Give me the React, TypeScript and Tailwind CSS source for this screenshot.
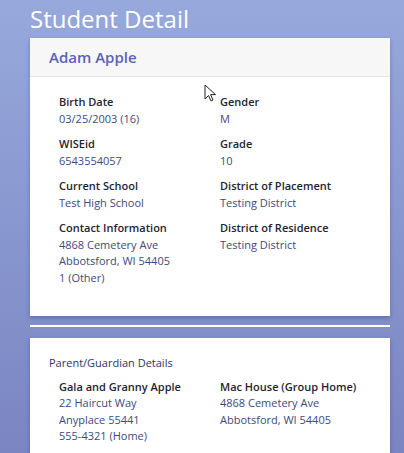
import React from "react";

const font = { fontFamily: '"Open Sans", "Liberation Sans", sans-serif' };

function Field({ label, lines }: { label: string; lines: string[] }) {
  return (
    <div className="flex flex-col">
      <div className="text-[11px] leading-[16.5px] font-semibold text-[#1f2433]">{label}</div>
      {lines.map((l) => (
        <div key={l} className="text-[11px] leading-[16.5px] text-[#3e4a7c]">
          {l}
        </div>
      ))}
    </div>
  );
}

function Cursor() {
  return (
    <svg
      className="absolute left-[204px] top-[84px]"
      width="14"
      height="20"
      viewBox="0 0 14 20"
    >
      <path
        d="M1 1 L1 15 L4.5 11.5 L7 17 L9 16 L6.6 10.6 L11.5 10.6 Z"
        fill="#fff"
        stroke="#222"
        strokeWidth="1"
        strokeLinejoin="round"
      />
    </svg>
  );
}

export default function App() {
  return (
    <div
      style={font}
      className="relative min-h-[453px] h-[453px] overflow-hidden bg-gradient-to-b from-[#97a9dc] to-[#7a85c1] px-[30px] pr-[14px]"
    >
      {/* Title */}
      <div className="h-[38px] text-[24px] leading-[38px] text-white">Student Detail</div>

      {/* Student card */}
      <div className="bg-white shadow-[0_2px_4px_rgba(40,50,100,0.35)]">
        <div className="h-[39px] bg-[#f7f7f7] border-b border-[#e2e4ea] px-[19px] flex items-center">
          <span className="text-[15px] font-semibold text-[#5a63b5]">Adam Apple</span>
        </div>
        <div className="grid grid-cols-[161px_1fr] gap-y-[9px] pl-[29px] pt-[17px] pb-[30px]">
          <Field label="Birth Date" lines={["03/25/2003 (16)"]} />
          <Field label="Gender" lines={["M"]} />
          <Field label="WISEid" lines={["6543554057"]} />
          <Field label="Grade" lines={["10"]} />
          <Field label="Current School" lines={["Test High School"]} />
          <Field label="District of Placement" lines={["Testing District"]} />
          <Field
            label="Contact Information"
            lines={["4868 Cemetery Ave", "Abbotsford, WI 54405", "1 (Other)"]}
          />
          <Field label="District of Residence" lines={["Testing District"]} />
        </div>
      </div>

      {/* Divider */}
      <div className="mt-[9px] mb-[11px] h-[1.5px] bg-white" />

      {/* Parent card */}
      <div className="bg-white shadow-[0_2px_4px_rgba(40,50,100,0.35)] pt-[17px] pb-[20px]">
        <div className="px-[19px] text-[11px] leading-[16px] text-[#2e3566]">Parent/Guardian Details</div>
        <div className="grid grid-cols-[161px_1fr] pl-[29px] pt-[8px]">
          <Field label="Gala and Granny Apple" lines={["22 Haircut Way", "Anyplace 55441", "555-4321 (Home)"]} />
          <Field label="Mac House (Group Home)" lines={["4868 Cemetery Ave", "Abbotsford, WI 54405"]} />
        </div>
      </div>

      <Cursor />
    </div>
  );
}
